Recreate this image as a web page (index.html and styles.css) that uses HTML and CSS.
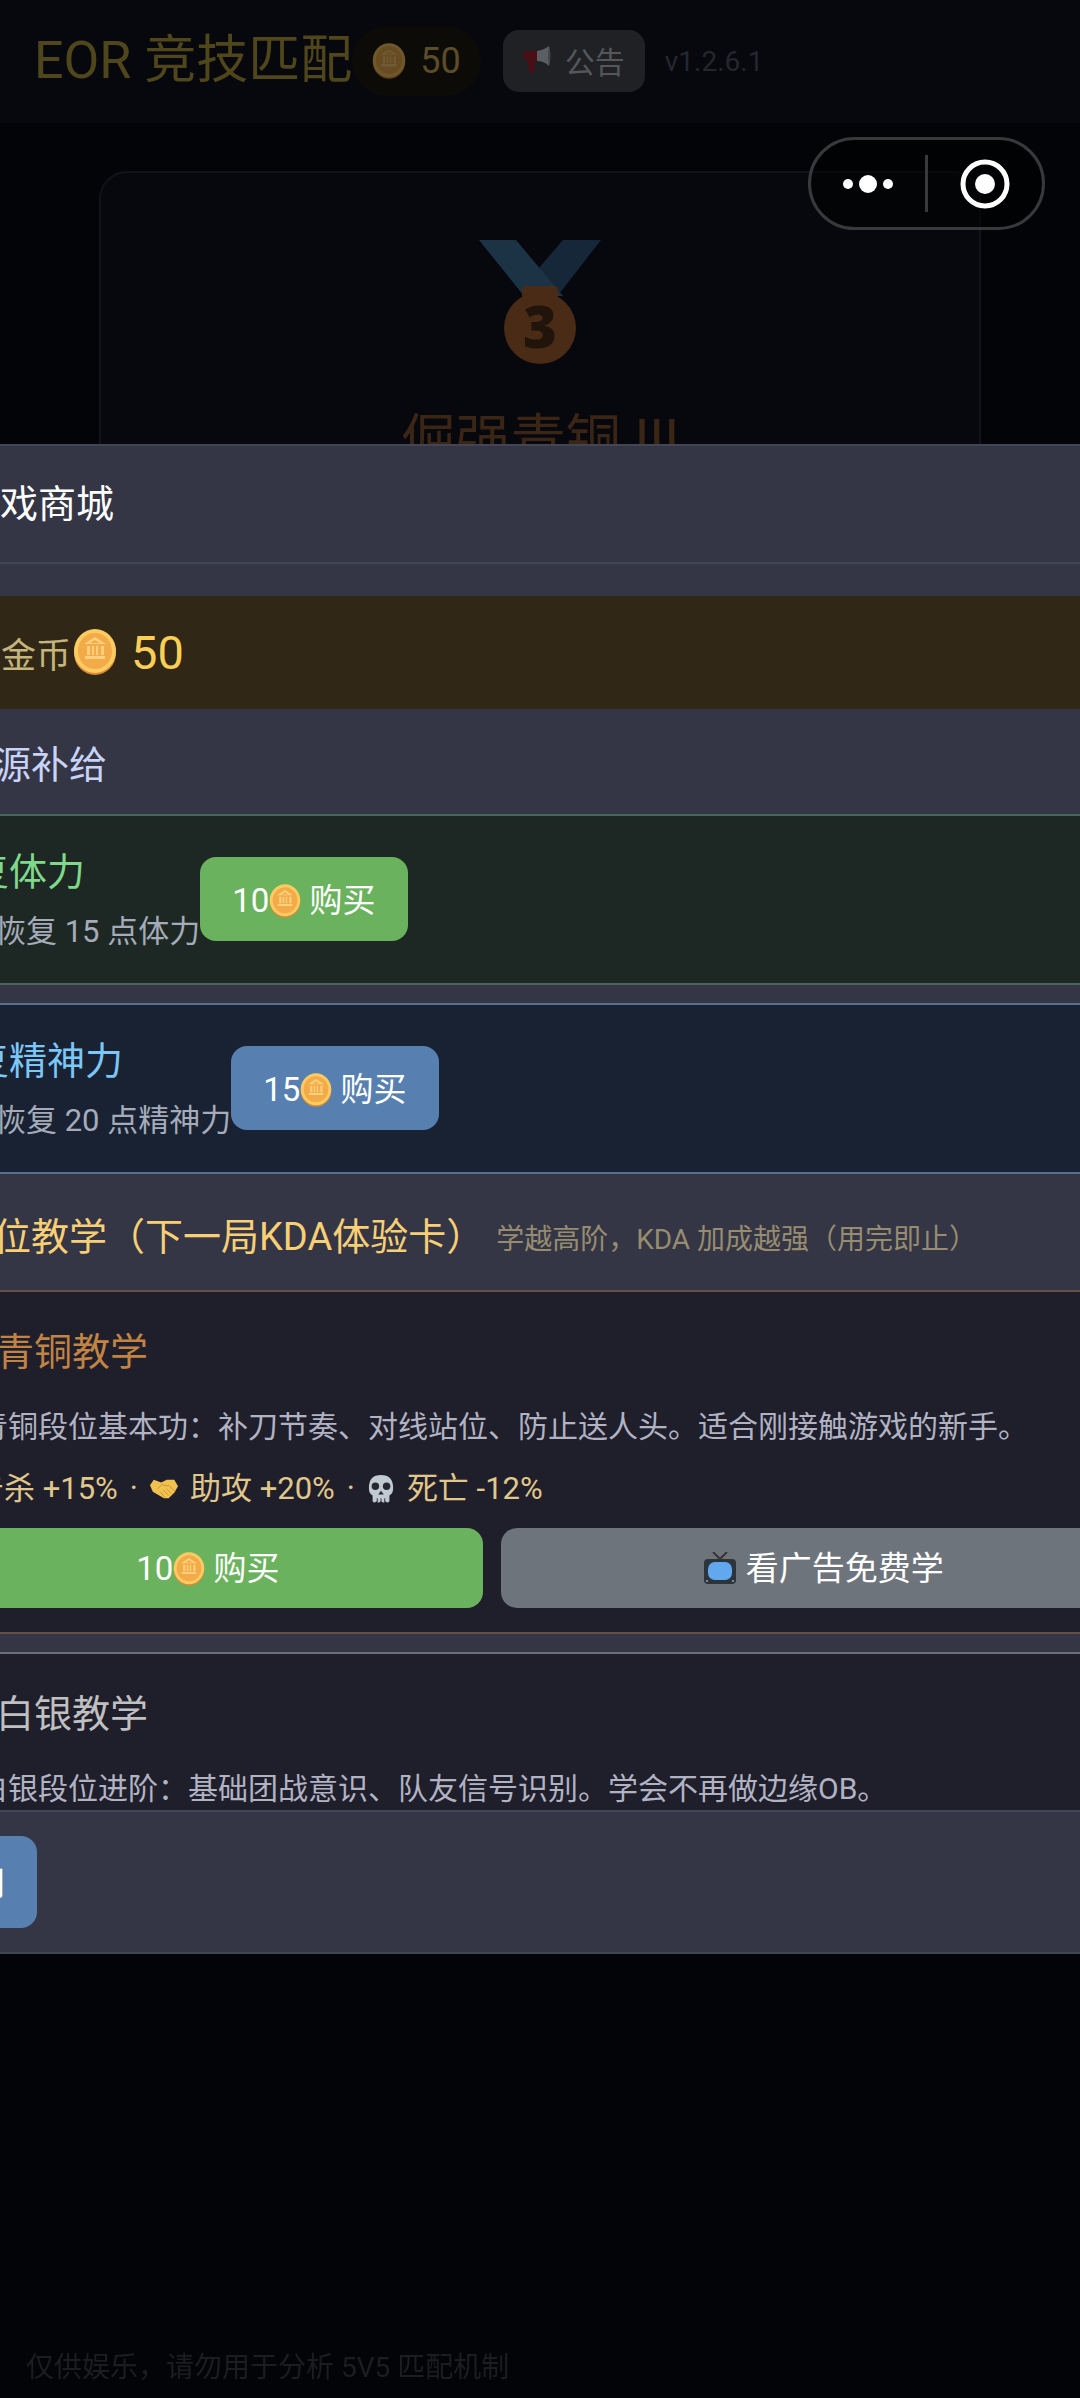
FILE: index.html
```html
<!DOCTYPE html>
<html lang="zh-CN">
<head>
    <meta charset="UTF-8">
    <meta name="viewport" content="width=device-width, initial-scale=1.0">
    <title>EOR 竞技匹配</title>
    <link rel="stylesheet" href="styles.css">
</head>
<body>
    <!-- shared icons -->
    <svg class="sprite" aria-hidden="true">
        <symbol id="icon-coin" viewBox="0 0 44 46">
            <ellipse cx="22" cy="24" rx="21" ry="22" fill="#d98a35"/>
            <ellipse cx="22" cy="22" rx="21" ry="22" fill="#fccb62"/>
            <ellipse cx="22" cy="22" rx="17" ry="18" fill="#f2ab48"/>
            <path d="M22 8 L33 15 H11 Z M12 27 H32 V30 H12 Z M14 17 H17 V26 H14 Z M19 17 H21 V26 H19 Z M23 17 H25 V26 H23 Z M28 17 H31 V26 H28 Z" fill="#fcd07c"/>
            <path d="M22 11 L27 14 H17 Z" fill="#f2ab48"/>
        </symbol>
    </svg>

    <header class="top-bar">
        <h1>EOR 竞技匹配</h1>
        <div class="coin-pill"><svg class="pill-coin"><use href="#icon-coin"/></svg>50</div>
        <button class="notice-btn" type="button">
            <svg class="notice-icon" viewBox="0 0 28 28">
                <path d="M2 5 L14 5 L14 15 L11 16 L12 25 Q9 28 6 25 L5 15 L2 14 Q-1 10 2 5Z" fill="#4a0f14"/>
                <path d="M14 5 Q21 4 26 0 Q28 10 26 20 Q21 15 14 15 Z" fill="#5b5e63"/>
                <path d="M26 0 Q29 10 26 20 Q24 10 26 0Z" fill="#44474c"/>
            </svg>公告
        </button>
        <span class="version">v1.2.6.1</span>
    </header>

    <main class="rank-card">
        <svg class="medal" viewBox="0 0 122 126">
            <path d="M84 0 H122 L80 54 L60 28 Z" fill="#16273a"/>
            <path d="M0 0 H37 L84 56 H45 Z" fill="#1c3346"/>
            <path d="M43 62 V50 Q43 46 47 46 H75 Q79 46 79 50 V62 Z" fill="#492b16"/>
            <circle cx="61" cy="88" r="36" fill="#492b16"/>
            <text class="medal-number" x="61" y="108" text-anchor="middle">3</text>
        </svg>
        <p class="rank-name">倔强青铜 III</p>
    </main>

    <footer class="page-footer">仅供娱乐，请勿用于分析 5V5 匹配机制</footer>

    <div class="overlay">
        <section class="modal" role="dialog" aria-labelledby="shop-title">
            <div class="modal-header">
                <svg class="title-icon"><use href="#icon-coin"/></svg>
                <h2 id="shop-title">游戏商城</h2>
            </div>

            <div class="modal-body">
                <div class="balance">
                    <span class="balance-label">我的金币</span>
                    <svg class="balance-coin"><use href="#icon-coin"/></svg>
                    <span class="balance-value">50</span>
                </div>

                <div class="section-title">
                    <svg class="section-icon"><use href="#icon-coin"/></svg>
                    <h3>资源补给</h3>
                </div>
                <div class="supply-card stamina">
                    <div class="supply-info">
                        <h4>恢复体力</h4>
                        <p>立即恢复 15 点体力</p>
                    </div>
                    <button class="btn btn-green" type="button">10<svg class="btn-coin"><use href="#icon-coin"/></svg> 购买</button>
                </div>
                <div class="supply-card spirit">
                    <div class="supply-info">
                        <h4>恢复精神力</h4>
                        <p>立即恢复 20 点精神力</p>
                    </div>
                    <button class="btn btn-blue" type="button">15<svg class="btn-coin"><use href="#icon-coin"/></svg> 购买</button>
                </div>

                <div class="section-title tutorial-title">
                    <svg class="section-icon"><use href="#icon-coin"/></svg>
                    <h3>段位教学（下一局KDA体验卡）</h3>
                    <span class="section-note">学越高阶，KDA 加成越强（用完即止）</span>
                </div>
                <div class="lesson-card bronze">
                    <div class="lesson-title">
                        <svg class="lesson-icon"><use href="#icon-coin"/></svg>
                        <h4>青铜教学</h4>
                    </div>
                    <p class="lesson-desc">
                        <svg class="desc-icon"><use href="#icon-coin"/></svg>
                        青铜段位基本功：补刀节奏、对线站位、防止送人头。适合刚接触游戏的新手。
                    </p>
                    <p class="lesson-stats">
                        <svg class="stat-icon" viewBox="0 0 30 30"><path d="M5 3 L26 26 M25 3 L4 26" stroke="#c4cbd3" stroke-width="3"/></svg>
                        <span>击杀 +15%</span>
                        <span>·</span>
                        <svg class="stat-icon" viewBox="0 0 30 30">
                            <path d="M0 11 L4 5 L12 8 L18 5 L26 5 L30 12 L26 19 L20 25 L15 25 L3 18 Z" fill="#f2c250"/>
                            <path d="M8 15 L13 10 Q17 13 20 11 L27 18 M14 16 L20 22 M11 18 L16 24 M18 15 L23 20" fill="none" stroke="#c98f2e" stroke-width="1"/>
                        </svg>
                        <span>助攻 +20%</span>
                        <span>·</span>
                        <svg class="stat-icon" viewBox="0 0 30 30">
                            <path d="M15 0 Q28 0 28 14 Q28 20 24 22 V28 Q22 31 20 28 Q18 31 15 28 Q12 31 10 28 Q8 31 6 28 V22 Q2 20 2 14 Q2 0 15 0Z" fill="#c1c9d2"/>
                            <circle cx="9" cy="12" r="4" fill="#26292f"/>
                            <circle cx="21" cy="12" r="4" fill="#26292f"/>
                            <path d="M15 17 L18 21 H12 Z" fill="#26292f"/>
                            <path d="M11 25 V29 M15 25 V29 M19 25 V29" stroke="#26292f" stroke-width="1"/>
                        </svg>
                        <span>死亡 -12%</span>
                    </p>
                    <div class="lesson-actions">
                        <button class="btn btn-green" type="button">10<svg class="btn-coin"><use href="#icon-coin"/></svg> 购买</button>
                        <button class="btn btn-gray" type="button">
                            <svg class="btn-tv" viewBox="0 0 32 32">
                                <path d="M9 0 L16 7 L23 0" fill="none" stroke="#393331" stroke-width="2"/>
                                <rect x="0" y="7" width="32" height="25" rx="4" fill="#2c343c"/>
                                <rect x="4" y="10" width="24" height="18" rx="7" fill="#62a8ee"/>
                                <circle cx="3" cy="29" r="1" fill="#9aa2aa"/>
                                <circle cx="29" cy="29" r="1" fill="#9aa2aa"/>
                            </svg>
                            看广告免费学
                        </button>
                    </div>
                </div>
                <div class="lesson-card silver">
                    <div class="lesson-title">
                        <svg class="lesson-icon"><use href="#icon-coin"/></svg>
                        <h4>白银教学</h4>
                    </div>
                    <p class="lesson-desc">
                        <svg class="desc-icon"><use href="#icon-coin"/></svg>
                        白银段位进阶：基础团战意识、队友信号识别。学会不再做边缘OB。
                    </p>
                </div>
            </div>

            <div class="modal-footer">
                <button class="btn btn-blue btn-close" type="button">关闭</button>
            </div>
        </section>
    </div>

    <!-- mini program capsule -->
    <div class="capsule">
        <button type="button" aria-label="更多">
            <svg width="50" height="50" viewBox="0 0 50 50" fill="#fff">
                <circle cx="5" cy="25" r="5"/><circle cx="25" cy="25" r="9"/><circle cx="45" cy="25" r="5"/>
            </svg>
        </button>
        <button type="button" aria-label="关闭小程序">
            <svg width="50" height="50" viewBox="0 0 50 50">
                <circle cx="25" cy="25" r="22" fill="none" stroke="#fff" stroke-width="5"/>
                <circle cx="25" cy="25" r="10" fill="#fff"/>
            </svg>
        </button>
    </div>
</body>
</html>
```

FILE: styles.css
```css
* {
    box-sizing: border-box;
    margin: 0;
    padding: 0;
}
body {
    display: flex;
    flex-direction: column;
    min-height: 100vh;
    overflow: hidden;
    font-family: Roboto, "Noto Sans CJK SC", sans-serif;
    background-color: #030408;
}
h1, h2, h3, h4 {
    font-weight: 400;
}
button {
    font-family: inherit;
    border: none;
    cursor: pointer;
}
.sprite {
    position: absolute;
    width: 0;
    height: 0;
}

/* page behind the overlay */
.top-bar {
    display: flex;
    align-items: center;
    padding: 26px 34px 27px;
    background-color: #07080d;
}
.top-bar h1 {
    font-size: 52px;
    line-height: 70px;
    color: #4f461b;
    white-space: nowrap;
}
.coin-pill {
    display: flex;
    align-items: center;
    gap: 14px;
    height: 70px;
    margin-right: 22px;
    padding: 0 20px;
    border-radius: 35px;
    background-color: #0d0b07;
    color: #5b4d28;
    font-size: 36px;
}
.pill-coin {
    width: 34px;
    height: 36px;
    opacity: 0.4;
}
.notice-btn {
    display: flex;
    align-items: center;
    gap: 14px;
    height: 62px;
    padding: 0 20px 3px;
    border-radius: 16px;
    background-color: #202125;
    color: #54565a;
    font-size: 30px;
}
.notice-icon {
    width: 28px;
    height: 28px;
}
.version {
    margin-left: 20px;
    font-size: 28px;
    color: #25262f;
}
.rank-card {
    display: flex;
    flex-direction: column;
    align-items: center;
    flex: 1;
    margin: 48px 99px;
    padding-top: 67px;
    border: 2px solid #111319;
    border-radius: 28px;
    background-color: #07080d;
}
.medal {
    width: 122px;
    height: 126px;
}
.medal-number {
    font-family: "Open Sans", sans-serif;
    font-size: 58px;
    font-weight: 800;
    fill: #21140b;
}
.rank-name {
    margin-top: 34px;
    font-size: 55px;
    line-height: 80px;
    color: #3b2616;
}
.page-footer {
    z-index: 2;
    padding: 14px 26px 10px;
    font-size: 28px;
    line-height: 40px;
    color: #1c1d21;
}

/* shop modal */
.overlay {
    position: fixed;
    inset: 0;
    display: flex;
    flex-direction: column;
    justify-content: center;
    overflow: hidden;
    background: linear-gradient(transparent 60%, #030408 60%, #030408 96%, transparent 96%);
}
.modal {
    display: flex;
    flex-direction: column;
    max-height: 63vh;
    margin: 0 -125px;
    border: 2px solid #414554;
    background-color: #343645;
}
.modal-header {
    display: flex;
    align-items: center;
    gap: 9px;
    padding: 28px 30px;
    border-bottom: 2px solid #414554;
}
.modal-header h2 {
    font-size: 38px;
    line-height: 60px;
    color: #fff;
}
.title-icon {
    width: 46px;
    height: 46px;
}
.modal-body {
    flex: 1;
    min-height: 0;
    padding: 32px 30px 0;
    overflow: hidden;
}
.balance {
    display: flex;
    align-items: center;
    height: 113px;
    margin-bottom: 28px;
    padding: 0 24px;
    background-color: #302716;
}
.balance-label {
    font-size: 35px;
    color: #c5b57c;
}
.balance-coin {
    width: 44px;
    height: 46px;
    margin: 0 14px 0 2px;
}
.balance-value {
    font-size: 47px;
    color: #f9cf55;
}
.section-title {
    display: flex;
    align-items: center;
    gap: 12px;
    margin-bottom: 21px;
    white-space: nowrap;
}
.section-title h3 {
    font-size: 38px;
    line-height: 56px;
    color: #c9d3f8;
}
.section-icon {
    width: 36px;
    height: 36px;
}
.section-title.tutorial-title {
    margin: 35px 0 25px;
}
.tutorial-title h3 {
    color: #f8cf75;
}
.section-note {
    font-size: 28px;
    color: #978c70;
}
.supply-card,
.lesson-card {
    margin-bottom: 18px;
    border: 2px solid;
}
.supply-card {
    display: flex;
    align-items: center;
    padding: 28px 24px;
}
.supply-info h4 {
    margin-bottom: 9px;
    font-size: 38px;
    line-height: 56px;
}
.supply-info p {
    font-size: 31px;
    line-height: 46px;
    color: #a5abb8;
}
.stamina {
    border-color: #45685b;
    background-color: #1d2824;
}
.stamina h4 {
    color: #80d98a;
}
.spirit {
    border-color: #57718a;
    background-color: #182233;
}
.spirit h4 {
    color: #7cc6f8;
}
.lesson-card {
    padding: 24px;
    background-color: #1f1e2b;
}
.lesson-title {
    display: flex;
    align-items: center;
    gap: 9px;
}
.lesson-title h4 {
    font-size: 38px;
    line-height: 72px;
}
.lesson-icon {
    width: 54px;
    height: 54px;
}
.bronze {
    border-color: #664f46;
}
.bronze h4 {
    color: #c28444;
}
.silver {
    border-color: #6b6f78;
}
.silver h4 {
    color: #c0c0c0;
}
.lesson-desc,
.lesson-stats {
    display: flex;
    align-items: center;
    margin-top: 16px;
    line-height: 46px;
    white-space: nowrap;
}
.lesson-desc {
    gap: 9px;
    font-size: 30px;
    color: #b1b3c3;
}
.lesson-stats {
    gap: 12px;
    font-size: 31px;
    color: #e0c78a;
}
.desc-icon {
    width: 36px;
    height: 36px;
}
.stat-icon {
    width: 28px;
    height: 30px;
}
.lesson-actions {
    display: flex;
    gap: 18px;
    margin-top: 16px;
}
.lesson-actions .btn {
    flex: 1 1 auto;
    height: 80px;
}

.btn {
    height: 84px;
    padding: 0 32px 3px;
    border-radius: 16px;
    font-size: 33px;
    color: #fff;
    white-space: nowrap;
}
.btn-green {
    background-color: #6ab25d;
}
.btn-blue {
    background-color: #5780b0;
}
.btn-gray {
    background-color: #6e747c;
}
.btn-coin {
    width: 32px;
    height: 34px;
    vertical-align: -6px;
}
.btn-tv {
    width: 32px;
    height: 32px;
    margin-right: 2px;
    vertical-align: -4px;
}
.modal-footer {
    padding: 24px 30px;
    border-top: 2px solid #414554;
}
.btn-close {
    display: block;
    height: 92px;
}

/* floats over everything, including the modal */
.capsule {
    position: fixed;
    top: 137px;
    right: 35px;
    display: flex;
    width: 237px;
    height: 93px;
    padding: 15px 0;
    border: 3px solid #38393b;
    border-radius: 47px;
    background-color: rgba(0, 0, 0, 0.5);
}
.capsule button {
    display: flex;
    align-items: center;
    justify-content: center;
    flex: 1;
    background: none;
}
.capsule button + button {
    border-left: 3px solid #38393b;
}
```
